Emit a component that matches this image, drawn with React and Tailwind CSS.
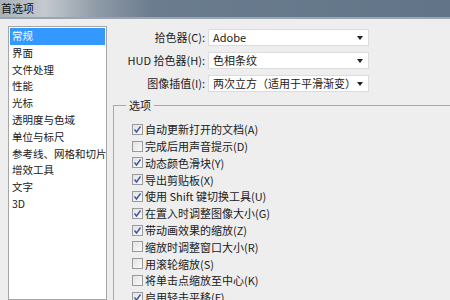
import React from 'react';

const SECTIONS = ['常规', '界面', '文件处理', '性能', '光标', '透明度与色域', '单位与标尺', '参考线、网格和切片', '增效工具', '文字', '3D'];

const OPTIONS = [
  { label: '自动更新打开的文档(A)', checked: true },
  { label: '完成后用声音提示(D)', checked: false },
  { label: '动态颜色滑块(Y)', checked: true },
  { label: '导出剪贴板(X)', checked: true },
  { label: '使用 Shift 键切换工具(U)', checked: true },
  { label: '在置入时调整图像大小(G)', checked: true },
  { label: '带动画效果的缩放(Z)', checked: true },
  { label: '缩放时调整窗口大小(R)', checked: false },
  { label: '用滚轮缩放(S)', checked: false },
  { label: '将单击点缩放至中心(K)', checked: false },
  { label: '启用轻击平移(F)', checked: true },
];

const PICKERS = [
  { label: '拾色器(C):', value: 'Adobe' },
  { label: 'HUD 拾色器(H):', value: '色相条纹' },
  { label: '图像插值(I):', value: '两次立方（适用于平滑渐变）' },
];

function Checkbox({ checked }) {
  return (
    <span className="w-[11px] h-[11px] shrink-0 border border-[#9a9a9a] bg-gradient-to-br from-[#e2e2e2] to-[#fafafa] flex items-center justify-center">
      {checked && (
        <svg width="9" height="9" viewBox="0 0 9 9">
          <path d="M1.5 4.5 L3.5 7 L7.5 1.5" fill="none" stroke="#3658a8" strokeWidth="1.4" />
        </svg>
      )}
    </span>
  );
}

export default function App() {
  return (
    <div
      className="w-[450px] h-[300px] overflow-hidden bg-[#eeeeee] text-[11px] text-[#202020] flex flex-col"
      style={{ fontFamily: '"Noto Sans CJK SC", "Noto Sans", sans-serif' }}
    >
      {/* title bar */}
      <div className="h-[19px] shrink-0 flex items-center px-[1px] bg-[linear-gradient(90deg,#a9b1b9_0%,#c3c9ce_10%,#8d99a6_22%,#6a7c8e_34%,#627588_100%)] border-b-2 border-[#9aa5b1]">
        <span className="text-[11px] leading-none text-[#111]">首选项</span>
      </div>

      <div className="flex flex-1 pl-[8px] pt-[7px] min-h-0">
        {/* section list */}
        <div className="w-[99px] shrink-0 bg-white border border-[#a6a6a6] pt-[1px] px-[1px] text-[10.5px]">
          {SECTIONS.map((s, i) => (
            <div
              key={s}
              className={`h-[16.8px] leading-[16.8px] pl-[2px] whitespace-nowrap ${i === 0 ? 'bg-[#3399ff] text-white' : ''}`}
            >
              {s}
            </div>
          ))}
        </div>

        {/* settings */}
        <div className="flex-1 ml-[6px] flex flex-col">
          <div className="flex flex-col gap-[6px] pt-[3px]">
            {PICKERS.map(p => (
              <div key={p.label} className="flex items-center h-[17px]">
                <span className="w-[95px] text-right pr-[3px] whitespace-nowrap">{p.label}</span>
                <div className="w-[161px] h-[17px] bg-white border border-[#dcdcdc] flex items-center justify-between pl-[4px] pr-[5px]">
                  <span className="whitespace-nowrap leading-none">{p.value}</span>
                  <svg width="6" height="4" viewBox="0 0 6 4" className="shrink-0">
                    <path d="M0 0 H6 L3 4 Z" fill="#222" />
                  </svg>
                </div>
              </div>
            ))}
          </div>

          <fieldset className="mt-[5px] -mr-[20px] border-l border-t border-[#a9a9a9] pl-[18px] pt-[8px] min-w-0">
            <legend className="-ml-[6px] px-[3px] leading-[16px]">选项</legend>
            {OPTIONS.map(o => (
              <div key={o.label} className="flex items-center gap-[2px] h-[16.8px] whitespace-nowrap">
                <Checkbox checked={o.checked} />
                <span>{o.label}</span>
              </div>
            ))}
          </fieldset>
        </div>
      </div>
    </div>
  );
}
